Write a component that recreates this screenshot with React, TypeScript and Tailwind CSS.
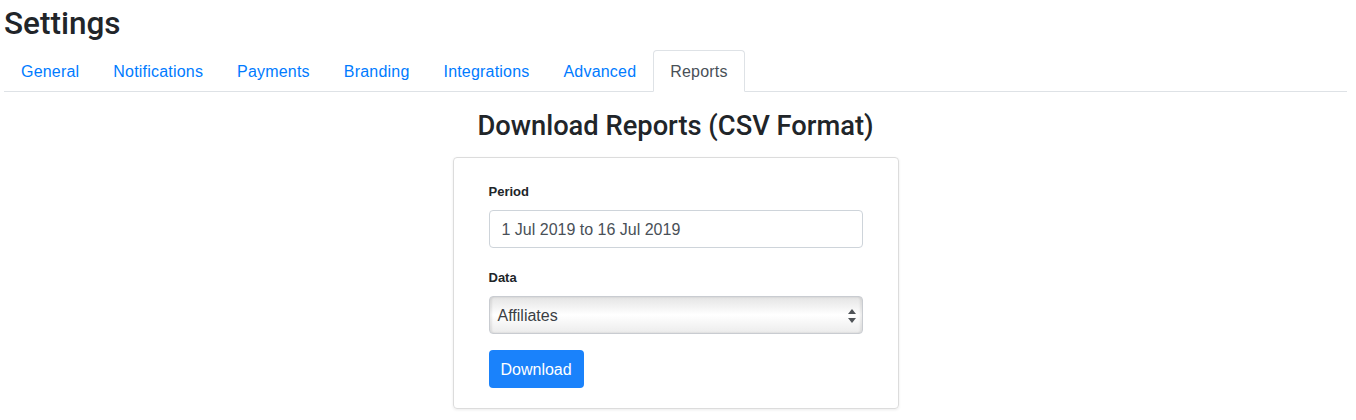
import { useState } from "react";

const tabs = ["General", "Notifications", "Payments", "Branding", "Integrations", "Advanced", "Reports"];

export default function App() {
  const [active, setActive] = useState("Reports");

  return (
    <div className="min-h-[420px] bg-white font-['Liberation_Sans',Arial,sans-serif] text-[#212529] pl-[4px] pr-[9px]">
      <h2 className="pt-[5px] font-['Roboto',sans-serif] text-[31.5px] leading-[38px] font-medium mb-[7px]">Settings</h2>

      {/* Tabs */}
      <nav className="flex border-b border-[#dee2e6]">
        {tabs.map((t) => {
          const isActive = t === active;
          return (
            <button
              key={t}
              onClick={() => setActive(t)}
              className={`px-4 pt-[9px] pb-[7px] text-base leading-6 tracking-[0.2px] -mb-px border rounded-t-[4px] ${
                isActive
                  ? "border-[#dee2e6] border-b-white bg-white text-[#495057]"
                  : "border-transparent text-[#007bff]"
              }`}
            >
              {t}
            </button>
          );
        })}
      </nav>

      <h3 className="mt-[17px] mb-[14px] text-center font-['Roboto',sans-serif] text-[27.3px] leading-[34px] font-medium">
        Download Reports (CSV Format)
      </h3>

      {/* Card */}
      <div className="mx-auto w-[446px] border border-[#dcdcdc] rounded-[4px] shadow-[0_1px_3px_rgba(0,0,0,0.08)] px-[35px] pt-[24px] pb-[20px]">
        <div className="mb-[20px]">
          <label className="block text-[13px] leading-5 font-bold mb-[8px]">Period</label>
          <input
            readOnly
            value="1 Jul 2019 to 16 Jul 2019"
            className="w-full h-[38px] px-3 pt-[2px] border border-[#ced4da] rounded-[4px] text-base text-[#495057] outline-none"
          />
        </div>
        <div className="mb-4">
          <label className="block text-[13px] leading-5 font-bold mb-[8px]">Data</label>
          <div className="relative h-[38px] w-full rounded-[4px] border border-[#c9ccd1] bg-gradient-to-b from-[#e4e4e4] via-white to-[#ececec] shadow-[inset_2px_0_2px_rgba(0,0,0,0.08),inset_-2px_0_2px_rgba(0,0,0,0.08)] flex items-center px-2 pt-[2px]">
            <span className="text-base text-[#3b3f44]">Affiliates</span>
            <svg className="absolute right-[6px] top-[12px]" width="8" height="14" viewBox="0 0 8 14">
              <path d="M4 0 L8 5 L0 5 Z" fill="#505458" />
              <path d="M4 14 L8 9 L0 9 Z" fill="#505458" />
            </svg>
          </div>
        </div>
        <button className="h-[38px] px-3 pt-[2px] rounded-[4px] bg-[#1a82fb] text-white text-base">Download</button>
      </div>
    </div>
  );
}
